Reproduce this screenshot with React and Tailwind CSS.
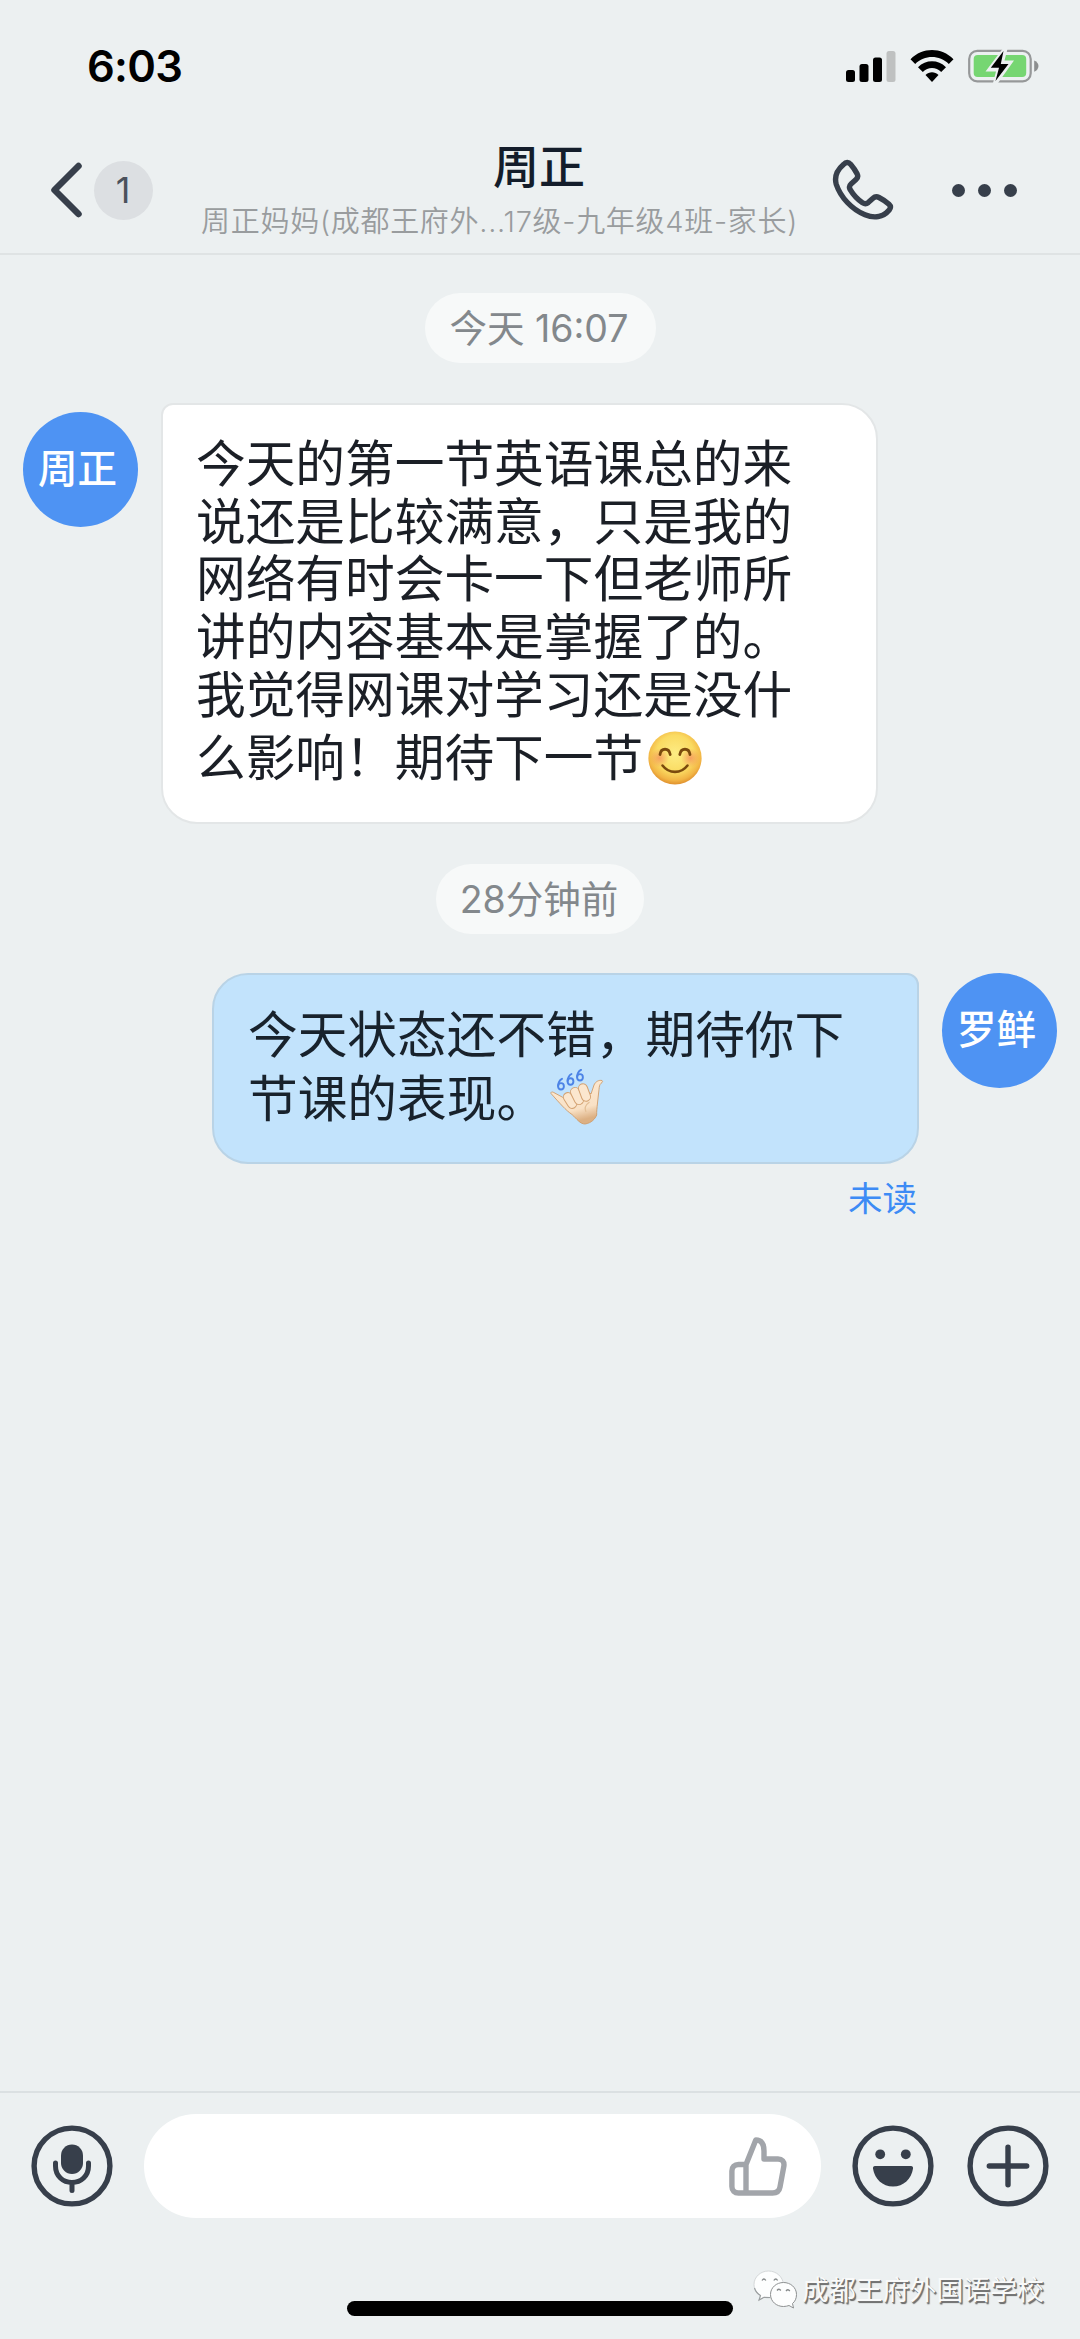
const INK = '#373f4b';

function SignalIcon() {
  return (
    <svg width="50" height="32" viewBox="0 0 50 32" className="block">
      <rect x="0" y="20" width="9" height="12" rx="2.5" fill="#000" />
      <rect x="13.5" y="14" width="9" height="18" rx="2.5" fill="#000" />
      <rect x="27" y="7.5" width="9" height="24.5" rx="2.5" fill="#000" />
      <rect x="40.5" y="1" width="9" height="31" rx="2.5" fill="#bfc1c1" />
    </svg>
  );
}

function WifiIcon() {
  return (
    <svg width="44" height="32" viewBox="0 0 44 32" className="block">
      <path d="M0.5 9.2C12.5-3 31.5-3 43.5 9.2L38.8 14C29.5 4.7 14.5 4.7 5.2 14Z" fill="#000" />
      <path d="M8 17.2C15.8 9.3 28.2 9.3 36 17.2L31.2 22C26 16.8 18 16.8 12.8 22Z" fill="#000" />
      <path d="M15.5 25C19.2 21.4 24.8 21.4 28.5 25L22 32Z" fill="#000" />
    </svg>
  );
}

function BatteryIcon() {
  return (
    <svg width="71" height="34" viewBox="0 0 71 34" className="block">
      <rect x="1.2" y="1.9" width="61.5" height="30.4" rx="8" fill="none" stroke="#969899" strokeWidth="2.2" />
      <rect x="5.7" y="6" width="52.5" height="22" rx="4" fill="#76d672" />
      <path d="M66.2 11.5C69.2 12.5 70.5 15 70.5 17S69.2 21.7 66.2 22.7Z" fill="#8c8e8f" />
      <path d="M34.5 0L17.5 22.500H28L25 34H30L46 11.500H36.500L39.500 0Z" fill="#ecf0f1" />
      <path d="M35.500 2L22.800 18.800H31L27.500 32L40.500 15H32.800Z" fill="#000" />
    </svg>
  );
}

function PhoneIcon() {
  return (
    <svg width="62" height="62" viewBox="0 0 62 62" fill="none" stroke={INK} strokeWidth="5.400" strokeLinejoin="round" className="block">
      <path d="M11.500 5.500C14 2.800 16.500 2.800 18.600 5.200C21.200 8.200 23.500 11.600 25.200 15C26.200 17.200 25.800 19 24 20.600L19 25C17 26.800 17 28.500 18.200 30.700C21.500 36.200 25.500 40.500 30.500 43.800C32.500 45 34.500 45 36.200 43.600L41 39.300C42.700 37.700 45 37.500 47 38.500C50.800 40.400 54 42.500 57 45.300C58.800 47 58.800 49 57.200 51C51 58.500 42 59.500 33 55.800C19.500 50.300 8.500 38 4.300 25.500C2 17.500 4.500 11.500 11.500 5.500Z" />
    </svg>
  );
}

function SmileEmoji() {
  return (
    <svg width="54" height="54" viewBox="0 0 54 54" className="block">
      <defs>
        <radialGradient id="face" cx="50%" cy="42%" r="58%">
          <stop offset="0%" stopColor="#fdec84" />
          <stop offset="60%" stopColor="#fadb62" />
          <stop offset="86%" stopColor="#f2b545" />
          <stop offset="100%" stopColor="#df8f2d" />
        </radialGradient>
        <radialGradient id="cheek">
          <stop offset="0%" stopColor="#f2785a" stopOpacity="0.6" />
          <stop offset="100%" stopColor="#f2785a" stopOpacity="0" />
        </radialGradient>
      </defs>
      <circle cx="27" cy="27" r="26.600" fill="url(#face)" />
      <circle cx="11.500" cy="27" r="9.500" fill="url(#cheek)" />
      <circle cx="42.500" cy="27" r="9.500" fill="url(#cheek)" />
      <path d="M12 23.500C13 16.500 21 16.500 22.200 23.500" fill="none" stroke="#7b4a0d" strokeWidth="2.800" strokeLinecap="round" />
      <path d="M31.800 23.500C33 16.500 41 16.500 42 23.500" fill="none" stroke="#7b4a0d" strokeWidth="2.800" strokeLinecap="round" />
      <path d="M14.500 34.500C21 43 33 43 39.500 34.500" fill="none" stroke="#7b4a0d" strokeWidth="2.600" strokeLinecap="round" />
    </svg>
  );
}

function HandEmoji() {
  return (
    <svg width="54" height="57" viewBox="0 0 54 57" className="block">
      <defs>
        <linearGradient id="skin" x1="0" y1="0" x2="0.300" y2="1">
          <stop offset="0%" stopColor="#fcead4" />
          <stop offset="75%" stopColor="#f9e1c5" />
          <stop offset="100%" stopColor="#dcb083" />
        </linearGradient>
      </defs>
      <g fill="none" stroke="#4c83e6" strokeWidth="1.900" strokeLinecap="round">
        <g id="six">
          <ellipse cx="11" cy="17.300" rx="2.900" ry="3.200" />
          <path d="M8.100 16.800C8.200 13.500 9.500 11.200 12 9.800" />
        </g>
        <use href="#six" x="9.500" y="-4.800" />
        <use href="#six" x="19" y="-9" />
      </g>
      <path d="M1 24.500C0.500 23 2 22.600 3.200 23.200L14 29L20 26L38 22L41 25L44 16C45.500 12.500 49 10.800 52 11.500C53 12.500 52.500 13.300 51 14.300C49.500 15.800 49.300 17.500 49 20.500L47.500 34C47 39 46.500 43 46.700 46C45 50 41.500 54 35 55C30 55 27 50 22 45.500C16 41.500 9.500 34 1 24.500Z" fill="url(#skin)" stroke="#cf9c6a" strokeWidth="0.900" strokeLinejoin="round" />
      <g fill="#fbe7cf" stroke="#d3a272" strokeWidth="1">
        <rect x="-4.500" y="-8.500" width="9" height="17" rx="4.500" transform="translate(20 31.500) rotate(-32)" />
        <rect x="-4.500" y="-9" width="9" height="18" rx="4.500" transform="translate(27 27) rotate(-26)" />
        <rect x="-4.500" y="-9" width="9" height="18" rx="4.500" transform="translate(34.500 23.500) rotate(-20)" />
      </g>
      <path d="M39.500 33C36 35.500 34 39 36 43" fill="none" stroke="#e3bf96" strokeWidth="1.200" />
    </svg>
  );
}

function MicIcon() {
  return (
    <svg width="82" height="82" viewBox="0 0 82 82" fill="none" stroke={INK} strokeWidth="5.400" className="block">
      <circle cx="41" cy="41" r="37.900" />
      <rect x="30" y="19.500" width="22" height="29.500" rx="11" fill={INK} stroke="none" />
      <path d="M24.500 38V41C24.500 51 32 57.500 41 57.500S57.500 51 57.500 41V38M41 57.500V65.500" strokeWidth="5" strokeLinecap="round" />
    </svg>
  );
}

function LaughIcon() {
  return (
    <svg width="82" height="82" viewBox="0 0 82 82" fill="none" className="block">
      <circle cx="41" cy="41" r="37.900" stroke={INK} strokeWidth="5.400" />
      <circle cx="28.200" cy="29.300" r="4.900" fill={INK} />
      <circle cx="53.800" cy="29.300" r="4.900" fill={INK} />
      <path d="M23 41H59C60.500 41 61.200 42 61 43.500C59.500 54 51.500 61.500 41 61.500S22.500 54 21 43.500C20.800 42 21.500 41 23 41Z" fill={INK} />
    </svg>
  );
}

function PlusIcon() {
  return (
    <svg width="82" height="82" viewBox="0 0 82 82" fill="none" stroke={INK} strokeWidth="5.400" strokeLinecap="round" className="block">
      <circle cx="41" cy="41" r="37.900" />
      <path d="M22.300 41H59.700M41 22.300V59.700" />
    </svg>
  );
}

function ThumbIcon() {
  return (
    <svg width="58" height="59" viewBox="0 0 58 59" fill="none" stroke="#a2a5aa" strokeWidth="5.400" strokeLinejoin="round" className="block">
      <path d="M17 27.500H9.500C5.500 27.500 2.900 30 2.900 34V49.500C2.900 53.500 5.500 56 9.500 56H43.500C47.500 56 50.300 54 51 50L54.900 29C55.500 24.500 53 22 49 22H35V14C35 7 32.500 3 26.800 2.900L17 27.500V56" />
    </svg>
  );
}

function WechatMark() {
  return (
    <svg width="45" height="40" viewBox="0 0 45 40" className="block">
      <path d="M15.500 1C7.500 1 1 7 1 14.500C1 19 3.500 23 7.500 25.500L6 30L11 27.300C19 30 31 24 30.500 14.500C30 7 23.500 1 15.500 1Z" fill="#fdfefe" stroke="#d0d4d5" strokeWidth="0.900" />
      <path d="M1.500 18C2.500 21.500 4.500 23.700 7.500 25.500L6 30L11 27.300L17 27.500" fill="none" stroke="#9b9fa0" strokeWidth="1.100" />
      <path d="M30.500 12.500C23.500 12.500 17.500 17.500 17.500 24.500S23.500 36.500 30.500 36.500C32.500 36.500 34.500 36 36 35.500L40.500 38L39.500 33.500C42 31.500 43.500 28.500 43.500 24.500C43.500 17.500 37.500 12.500 30.500 12.500Z" fill="#fdfefe" stroke="#8e9192" strokeWidth="1" />
      <path d="M9 10.500Q11 7.500 12.800 10.500M20.800 10.500Q22.800 7.500 24.600 10.500M24 20.500Q26 18 27.800 20.500M33 21Q35 18.500 36.800 21" fill="none" stroke="#85898a" strokeWidth="1.300" />
    </svg>
  );
}

function TimePill({ children, className }) {
  return (
    <div className={`flex h-[70px] items-center justify-center self-center rounded-full bg-[#f7f9f9] pt-[2px] pr-[2px] text-[37.500px] leading-none text-[#83888c] ${className}`}>
      {children}
    </div>
  );
}

function Avatar({ name }) {
  return (
    <div className="flex h-[115px] w-[115px] shrink-0 items-center justify-center rounded-full bg-[#4e93f3] pr-[6px] text-[39.500px] leading-none font-medium text-white">
      {name}
    </div>
  );
}

const incoming = [
  '今天的第一节英语课总的来',
  '说还是比较满意，只是我的',
  '网络有时会卡一下但老师所',
  '讲的内容基本是掌握了的。',
  '我觉得网课对学习还是没什',
];

export default function App() {
  return (
    <div className="flex h-[2339px] w-[1080px] flex-col overflow-hidden bg-[#ecf0f1] font-[Inter,'Noto_Sans_CJK_SC',sans-serif]">
      <header className="flex h-[255px] shrink-0 flex-col border-b-2 border-[#dfe3e4]">
        <div className="flex h-[132px] shrink-0 items-center pr-[41px] pl-[87px]">
          <span className="pt-[2px] text-[43.500px] leading-none font-semibold tracking-[-0.700px] text-black">6:03</span>
          <div className="ml-auto flex items-center">
            <SignalIcon />
            <div className="ml-[14px]"><WifiIcon /></div>
            <div className="ml-[14px]"><BatteryIcon /></div>
          </div>
        </div>
        <div className="flex h-[116px] items-center">
          <svg width="34" height="58" viewBox="0 0 34 58" fill="none" stroke={INK} strokeWidth="6.500" strokeLinecap="round" strokeLinejoin="round" className="ml-[50px] block">
            <path d="M28.500 5L4.500 29L28.500 53" />
          </svg>
          <div className="ml-[10px] flex h-[59px] w-[59px] items-center justify-center rounded-full bg-[#dcdfe2] pr-px text-[36px] leading-none text-[#4b515b]">1</div>
          <div className="ml-[48px] flex w-[598px] flex-col items-start pt-[6px]">
            <div className="ml-[292px] text-[46px] leading-[58px] font-medium whitespace-nowrap text-[#141d2b]">周正</div>
            <div className="text-[29px] leading-[54px] font-[350] tracking-[0.720px] whitespace-nowrap text-[#999c9e]">周正妈妈(成都王府外...17级-九年级4班-家长)</div>
          </div>
          <div className="ml-[33px]"><PhoneIcon /></div>
          <div className="ml-[58px] flex gap-[13px]">
            <i className="h-[13px] w-[13px] rounded-full bg-[#373f4b]" />
            <i className="h-[13px] w-[13px] rounded-full bg-[#373f4b]" />
            <i className="h-[13px] w-[13px] rounded-full bg-[#373f4b]" />
          </div>
        </div>
      </header>

      <main className="flex min-h-0 flex-1 flex-col">
        <TimePill className="mt-[38px] w-[231px]">今天 16:07</TimePill>

        <div className="mt-[40px] flex items-start pl-[23px]">
          <div className="mt-[9px]"><Avatar name="周正" /></div>
          <div className="ml-[23px] h-[421px] w-[717px] rounded-[36px] rounded-tl-[12px] border-2 border-[#e3e6e7] bg-white pt-[31px] pl-[33px] text-[49.700px] leading-[57.700px] whitespace-nowrap text-[#1b1f26]">
            {incoming.map((line) => (
              <div key={line}>{line}</div>
            ))}
            <div className="flex h-[68px] items-center">
              <span>么影响！期待下一节</span>
              <span className="mb-[2px] ml-[5px]"><SmileEmoji /></span>
            </div>
          </div>
        </div>

        <TimePill className="mt-[40px] w-[208px]">28分钟前</TimePill>

        <div className="mt-[39px] flex items-start justify-end pr-[23px]">
          <div className="flex flex-col items-end">
            <div className="h-[191px] w-[707px] rounded-[36px] rounded-tr-[12px] border-2 border-[#b9d3e6] bg-[#c2e3fc] pt-[29px] pl-[34px] text-[49.700px] leading-[63.500px] whitespace-nowrap text-[#18222c]">
              <div>今天状态还不错，期待你下</div>
              <div className="flex items-center">
                <span>节课的表现。</span>
                <span className="mb-[3px] ml-[4px]"><HandEmoji /></span>
              </div>
            </div>
            <div className="mt-[14px] mr-[2px] text-[34.500px] leading-[42px] text-[#3d8bf5]">未读</div>
          </div>
          <div className="ml-[23px]"><Avatar name="罗鲜" /></div>
        </div>
      </main>

      <footer className="flex h-[248px] shrink-0 flex-col border-t-2 border-[#dbe0e2]">
        <div className="mt-[21px] flex h-[104px] items-center pl-[31px]">
          <MicIcon />
          <div className="ml-[31px] flex h-[104px] w-[677px] items-center justify-end rounded-full bg-white pr-[34px]">
            <ThumbIcon />
          </div>
          <div className="ml-[31px]"><LaughIcon /></div>
          <div className="ml-[33px]"><PlusIcon /></div>
        </div>
        <div className="mt-[52px] flex items-start">
          <div className="mt-[31px] ml-[347px] h-[15px] w-[386px] rounded-full bg-black" />
          <div className="ml-[20px] flex items-center">
            <WechatMark />
            <span className="ml-[4px] text-[26.900px] leading-[40px] font-normal whitespace-nowrap text-[#f9fafa] [text-shadow:1px_1px_0_#777,1.500px_1.500px_1px_#666]">成都王府外国语学校</span>
          </div>
        </div>
      </footer>
    </div>
  );
}
